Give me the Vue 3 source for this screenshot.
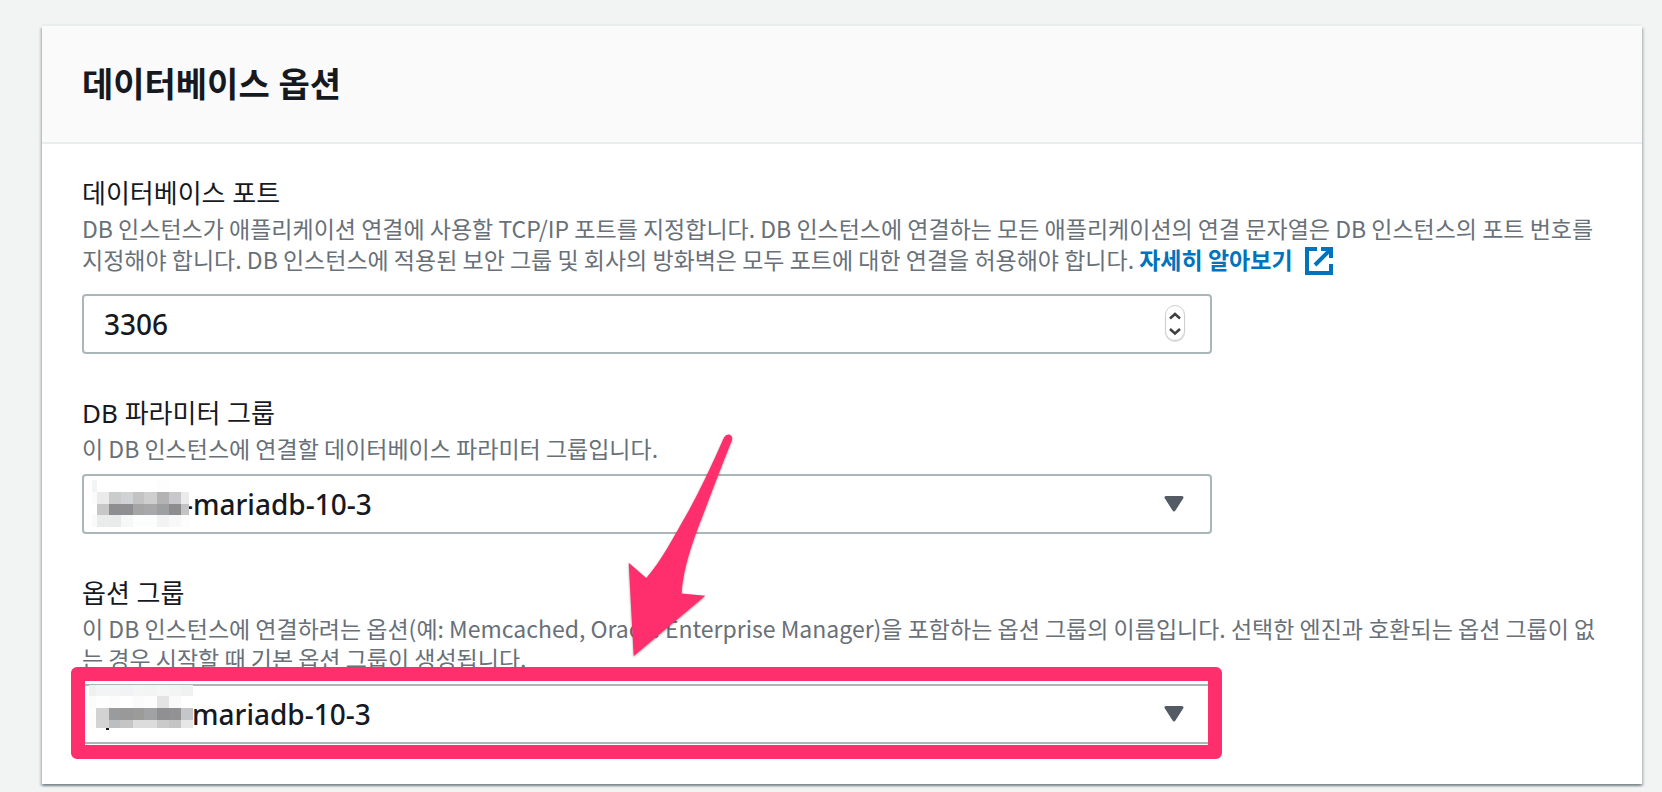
<script setup>
import { ref } from 'vue'

const port = ref(3306)
const parameterGroup = ref('mariadb-10-3')
const optionGroup = ref('mariadb-10-3')

const columns = [0, 5, 17, 29, 41, 52, 65, 77, 89, 97]
const rows = [0, 12, 24, 35, 47]
const parameterMask = [
  ['#f3f4f4', '#fff', '#fff', '#fff', '#fff', '#fff', '#fdfdfd', '#fff', '#fff'],
  ['#fbfbfb', '#ebebeb', '#cacccb', '#d1d2d3', '#c3c3c3', '#cecece', '#b3b3b3', '#c8c8ca', '#ebebeb'],
  ['#fff', '#c7c7c7', '#8e8e90', '#8f8f91', '#a5a5a5', '#a8a8aa', '#9e9fa0', '#8d8d8f', '#c3c3c3'],
  ['#f9fafa', '#eaebeb', '#e9ebeb', '#f7f7f7', '#fcfdfd', '#fcfdfd', '#f3f3f3', '#f7f8f8', '#fdfdfd'],
]
const optionColumns = [0, 7, 20, 31, 44, 55, 68, 80, 92, 104]
const optionRows = [0, 11, 23, 35, 43]
const optionMask = [
  ['#eff0f0', '#f3f4f5', '#f3f4f5', '#f1f3f4', '#f4f5f5', '#f3f4f4', '#f5f7f6', '#f3f4f4', '#f0f1f1'],
  ['#fafbfb', '#fefefe', '#fcfcfc', '#fff', '#fbfbfb', '#fdfdfd', '#e4e4e4', '#fafafa', '#fff'],
  ['#fdfdfd', '#d2d2d2', '#9a9b9c', '#999', '#9b9b99', '#a1a2a3', '#909092', '#929294', '#c5c6c9'],
  ['#fdfdfd', '#d4d4d4', '#bdbebf', '#c5c5c5', '#dcdcdc', '#dcdcdc', '#cacacb', '#c4c4c4', '#e7e7e7'],
]

function cells(xs, ys, colors) {
  return colors.flatMap((line, r) =>
    line.map((fill, c) => ({
      x: xs[c],
      y: ys[r],
      width: xs[c + 1] - xs[c],
      height: ys[r + 1] - ys[r],
      fill,
    })),
  )
}
const parameterCells = cells(columns, rows, parameterMask)
const optionCells = cells(optionColumns, optionRows, optionMask)
</script>

<template>
  <main class="page">
    <section class="card">
      <header class="card-header">
        <h2>데이터베이스 옵션</h2>
      </header>
      <form class="card-body" @submit.prevent>
        <div class="field">
          <label for="port">데이터베이스 포트</label>
          <p id="port-hint" class="hint hint-with-link">
            DB 인스턴스가 애플리케이션 연결에 사용할 TCP/IP 포트를 지정합니다. DB 인스턴스에 연결하는 모든 애플리케이션의 연결 문자열은 DB 인스턴스의 포트 번호를 지정해야 합니다. DB 인스턴스에 적용된 보안 그룹 및 회사의 방화벽은 모두 포트에 대한 연결을 허용해야 합니다.
            <a href="#" class="learn-more">자세히 알아보기<svg class="external" viewBox="0 0 32 32" aria-hidden="true">
              <path d="M14 4H4v24h24v-9M18 4h10v9M27 5 12 20" />
            </svg></a>
          </p>
          <div class="control">
            <input id="port" v-model="port" type="number" aria-describedby="port-hint" />
            <div class="stepper">
              <button type="button" aria-label="증가" @click="port++">
                <svg viewBox="0 0 18 17"><path d="M4 12.500 9 8l5 4.500" /></svg>
              </button>
              <button type="button" aria-label="감소" @click="port--">
                <svg viewBox="0 0 18 17"><path d="M4 6l5 4.500L14 6" /></svg>
              </button>
            </div>
          </div>
        </div>

        <div class="field">
          <label for="parameter-group">DB 파라미터 그룹</label>
          <p id="parameter-hint" class="hint">이 DB 인스턴스에 연결할 데이터베이스 파라미터 그룹입니다.</p>
          <div class="control">
            <select id="parameter-group" v-model="parameterGroup" aria-describedby="parameter-hint">
              <option value="mariadb-10-3">-mariadb-10-3</option>
            </select>
            <svg class="caret" viewBox="0 0 20 16" aria-hidden="true"><path d="M2 1.500h16L10 14z" /></svg>
            <svg class="mask mask-parameter" viewBox="0 0 97 47" shape-rendering="crispEdges" aria-hidden="true">
              <rect v-for="(cell, i) in parameterCells" :key="i" v-bind="cell" />
            </svg>
          </div>
        </div>

        <div class="field">
          <label for="option-group">옵션 그룹</label>
          <p id="option-hint" class="hint">이 DB 인스턴스에 연결하려는 옵션(예: Memcached, Oracle Enterprise Manager)을 포함하는 옵션 그룹의 이름입니다. 선택한 엔진과 호환되는 옵션 그룹이 없는 경우 시작할 때 기본 옵션 그룹이 생성됩니다.</p>
          <div class="control">
            <select id="option-group" v-model="optionGroup" class="option-select" aria-describedby="option-hint">
              <option value="mariadb-10-3">mariadb-10-3</option>
            </select>
            <svg class="caret" viewBox="0 0 20 16" aria-hidden="true"><path d="M2 1.500h16L10 14z" /></svg>
            <svg class="mask mask-option" viewBox="0 0 104 45" shape-rendering="crispEdges" aria-hidden="true">
              <rect v-for="(cell, i) in optionCells" :key="i" v-bind="cell" />
              <rect x="17" y="43" width="3" height="2" fill="#16191f" />
            </svg>
            <div class="highlight"></div>
            <svg class="arrow" viewBox="0 0 120 240" aria-hidden="true">
              <path d="M13.700 236 8.700 142.700 26.300 158C42 140 53 118 68 92Q85 61 104 17.500Q106 14 109.500 14.500Q113 16 112 20Q98 55 83 95C75 115 63 147 61.700 173.500L85.300 175.700Z" />
            </svg>
          </div>
        </div>
      </form>
    </section>
  </main>
</template>

<style>
body {
  margin: 0;
  background: #f2f3f3;
}
</style>

<style scoped>
.page {
  padding: 26px 20px 8px 42px;
  background: #f2f3f3;
  color: #16191f;
  font-family: "Noto Sans", "Noto Sans CJK KR", sans-serif;
}
.card {
  background: #fff;
  box-shadow: 0 -2px 0 #eaeded, 0 2px 2px rgba(0, 28, 36, 0.3), 2px 2px 2px rgba(0, 28, 36, 0.15), -2px 2px 2px rgba(0, 28, 36, 0.15);
}
.card-header {
  padding: 34px 40px;
  background: #fafafa;
  border-bottom: 2px solid #eaeded;
}
h2 {
  margin: 0;
  font-size: 34px;
  line-height: 48px;
  font-weight: 700;
}
.card-body {
  display: flex;
  flex-direction: column;
  gap: 39px;
  padding: 29px 40px 40px;
}
label {
  display: block;
  font-size: 26px;
  line-height: 40px;
}
.hint {
  margin: 0 -12px 11px 0;
  color: #687078;
  font-family: "Noto Sans CJK KR", "Noto Sans", sans-serif;
  font-size: 23px;
  line-height: 30px;
}
.hint-with-link {
  min-height: 70px;
}
.learn-more {
  color: #0073bb;
  font-weight: 700;
  text-decoration: none;
}
.external {
  width: 32px;
  height: 32px;
  margin: 2px 0 0 10px;
  vertical-align: -8px;
  fill: none;
  stroke: currentColor;
  stroke-width: 4;
}
.control {
  position: relative;
  width: calc(75% - 10px);
}
input,
select {
  display: block;
  box-sizing: border-box;
  width: 100%;
  height: 60px;
  margin: 0;
  padding: 0 20px;
  border: 2px solid #aab7b8;
  border-radius: 4px;
  background: #fff;
  color: #16191f;
  font: 500 28px "Noto Sans", "Noto Sans CJK KR", sans-serif;
  appearance: none;
}
input {
  appearance: textfield;
}
input::-webkit-inner-spin-button {
  appearance: none;
}
select {
  padding-left: 100px;
}
.option-select {
  padding-left: 108px;
}
.stepper {
  position: absolute;
  top: 11px;
  right: 27px;
  display: flex;
  flex-direction: column;
  width: 18px;
  border: 1px solid #cfcfcf;
  border-radius: 10px;
  background: #fff;
  box-shadow: 0 1px 1px rgba(0, 0, 0, 0.15);
}
.stepper button {
  height: 17px;
  padding: 0;
  border: 0;
  background: none;
}
.stepper svg {
  display: block;
  width: 18px;
  height: 17px;
  fill: none;
  stroke: #404040;
  stroke-width: 2.500;
}
.caret {
  position: absolute;
  top: 22px;
  right: 28px;
  width: 20px;
  height: 16px;
  fill: #545b64;
  stroke: #545b64;
  stroke-width: 3;
  stroke-linejoin: round;
  pointer-events: none;
}
.mask {
  position: absolute;
  pointer-events: none;
}
.mask-parameter {
  top: 6px;
  left: 10px;
  width: 97px;
  height: 47px;
}
.mask-option {
  top: 1px;
  left: 7px;
  width: 104px;
  height: 45px;
}
.highlight {
  position: absolute;
  inset: -17px -10px -15px -11px;
  border: 14px solid #ff2e6c;
  border-radius: 6px;
  pointer-events: none;
}
.arrow {
  position: absolute;
  top: -264px;
  left: 538px;
  width: 120px;
  height: 240px;
  fill: #ff2e6c;
  filter: drop-shadow(0 1px 1px rgba(0, 0, 0, 0.4));
  pointer-events: none;
}
</style>
